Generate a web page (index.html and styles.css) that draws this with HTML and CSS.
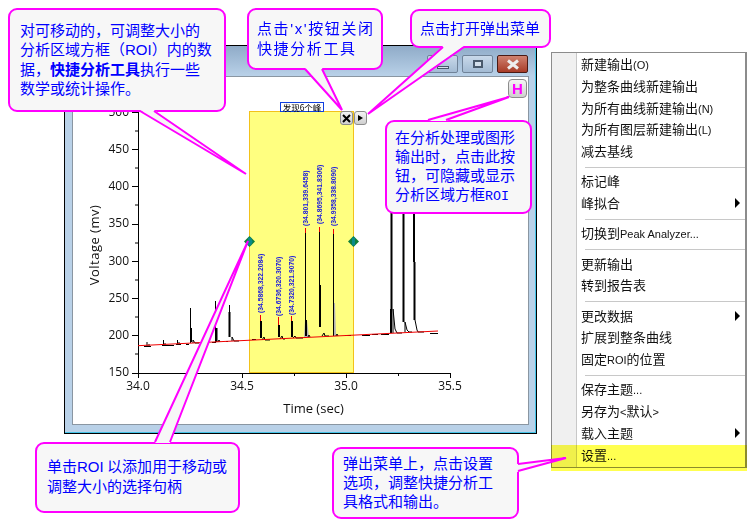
FILE: index.html
```html
<!DOCTYPE html>
<html>

<head>
    <meta charset="utf-8">
    <title>快捷分析工具</title>
    <link rel="stylesheet" href="styles.css">
</head>

<body>
    <div class="canvas">
        <div class="window">
            <div class="controls">
                <span class="ctl ctl-min"><i></i></span>
                <span class="ctl ctl-max"><i></i></span>
                <span class="ctl ctl-close">
                    <svg width="14" height="11" viewBox="0 0 14 11">
                        <path d="M2 1.500L12 9.500M12 1.500L2 9.500" stroke="#eeeeee" stroke-width="3" />
                    </svg>
                </span>
            </div>
            <div class="client">
                <svg class="chart" width="455" height="347" viewBox="73 77 455 347">
                    <!-- ROI -->
                    <rect x="249.500" y="111.500" width="104" height="261" fill="#ffff80" stroke="#f2c21a" />
                    <rect x="280.500" y="102.500" width="43" height="9" fill="#fff" stroke="#1040e0" />
                    <text x="302" y="110.500" class="roi-title">发现6个峰</text>

                    <!-- axes -->
                    <path d="M138.500 111V373.500H450" fill="none" stroke="#000" />
                    <path d="M132 112.500h6M132 149.500h6M132 186.500h6M132 224.500h6M132 261.500h6M132 298.500h6M132 335.500h6M132 373.500h6
                             M135 131h3M135 168h3M135 205h3M135 243h3M135 280h3M135 317h3M135 354h3
                             M138.500 373v5M242.500 373v5M346.500 373v5M450.500 373v5
                             M190.500 373v3M294.500 373v3M398.500 373v3" stroke="#000" fill="none" />

                    <text x="129" y="115.500" class="tick end">500</text>
                    <text x="129" y="152.500" class="tick end">450</text>
                    <text x="129" y="189.500" class="tick end">400</text>
                    <text x="129" y="226.500" class="tick end">350</text>
                    <text x="129" y="264.500" class="tick end">300</text>
                    <text x="129" y="301.500" class="tick end">250</text>
                    <text x="129" y="338.500" class="tick end">200</text>
                    <text x="129" y="376" class="tick end">150</text>
                    <text x="138" y="389.500" class="tick mid">34.0</text>
                    <text x="242" y="389.500" class="tick mid">34.5</text>
                    <text x="346" y="389.500" class="tick mid">35.0</text>
                    <text x="450" y="389.500" class="tick mid">35.5</text>
                    <text x="313.500" y="412.500" class="axis-name mid">Time (sec)</text>
                    <text transform="translate(98.500 245) rotate(-90)" class="axis-name voltage mid">Voltage (mv)</text>

                    <!-- grey fill under the tall peaks -->
                    <path d="M304 337l1-17h2l2 17zM333 336v-33h2l1 33z" fill="#b4b4b4" />

                    <!-- signal, thin strokes -->
                    <path d="M144 346.500h7M147 346v-4M149 346v-2
                             M162 345.500h12M163.500 345v-5M165 345v-2
                             M176 344.500h5M177.500 344v-4M179 344v-2
                             M186 344.500h3M190.500 343V308M193 343v-3l2 3h4
                             M212 342.500h4M215.500 342V301M218 342l1-2 1 2
                             M226 341.500h2M229.500 312V305M232 341v-4l2 4h5
                             M252 339.500h4M262 340l2-3 1 3h5
                             M280 339l2-3 1 3h2M293 338l2-2 1 2h7
                             M305.500 320V233M308 337l1-2 1 2
                             M319.500 285V232M322 336l2-3 1 3h4M333.500 336V234M336 336l1-2 1 2
                             M345 335.500h6M362 335.500h8M372 334.500h6M381 334.500h8
                             M393 333l0-24 2 20 2 4h5M405 332l0-10 2 8 2 2h3M415 320l2 10 1 2h6M430 333.500h8"
                        fill="none" stroke="#000" />
                    <!-- signal, thick strokes -->
                    <path d="M191 342V328M216.500 342V328M229.500 337V312M261 338V321M279 337V325M292 337V321M306 336V320M320 327V285
                             M391 333V309M391.500 309V212M403.500 322V212M414.500 320V262M414 262V212"
                        fill="none" stroke="#000" stroke-width="2" />

                    <path d="M138 345.700L438 331" fill="none" stroke="#f00000" />
                    <path d="M260.500 315v6M278.500 317v8M291.500 316v5M305.500 228v5M319.500 227v5M333.500 229v5" fill="none" stroke="#f00000" />

                    <!-- peak labels -->
                    <text transform="translate(263 313) rotate(-90)" class="peak">(34.5868,322.2084)</text>
                    <text transform="translate(281 316) rotate(-90)" class="peak">(34.6736,320.3070)</text>
                    <text transform="translate(294 315) rotate(-90)" class="peak">(34.7320,321.9070)</text>
                    <text transform="translate(308 226) rotate(-90)" class="peak">(34.801,339.6458)</text>
                    <text transform="translate(322 224) rotate(-90)" class="peak">(34.8695,341.8306)</text>
                    <text transform="translate(336 226) rotate(-90)" class="peak">(34.9358,338.8090)</text>

                    <!-- ROI handles -->
                    <path d="M249.500 236l5.500 5.500-5.500 5.500-5.500-5.500z" fill="#0f7f3c" />
                    <path d="M248 237.500h3l1.500 4-1.500 4h-3z" fill="#0a8a8a" />
                    <path d="M353.500 236l5.500 5.500-5.500 5.500-5.500-5.500z" fill="#0f7f3c" />
                    <path d="M352 237.500h3v8h-3z" fill="#0a8a8a" />
                </svg>
            </div>
        </div>

        <span class="tool tool-x">
            <svg width="9" height="9" viewBox="0 0 9 9">
                <path d="M1 1L8 8M8 1L1 8" stroke="#000" stroke-width="2" />
            </svg>
        </span>
        <span class="tool tool-arrow"><i></i></span>
        <span class="tool tool-h">H</span>

        <div class="menu">
            <div class="menu-item">新建输出<small>(O)</small></div>
            <div class="menu-item">为整条曲线新建输出</div>
            <div class="menu-item">为所有曲线新建输出<small>(N)</small></div>
            <div class="menu-item">为所有图层新建输出<small>(L)</small></div>
            <div class="menu-item">减去基线</div>
            <div class="menu-sep"></div>
            <div class="menu-item">标记峰</div>
            <div class="menu-item sub">峰拟合</div>
            <div class="menu-sep"></div>
            <div class="menu-item">切换到<small>Peak Analyzer...</small></div>
            <div class="menu-sep"></div>
            <div class="menu-item">更新输出</div>
            <div class="menu-item">转到报告表</div>
            <div class="menu-sep"></div>
            <div class="menu-item sub">更改数据</div>
            <div class="menu-item">扩展到整条曲线</div>
            <div class="menu-item">固定<small>ROI</small>的位置</div>
            <div class="menu-sep"></div>
            <div class="menu-item">保存主题<small>...</small></div>
            <div class="menu-item">另存为<small>&lt;</small>默认<small>&gt;</small></div>
            <div class="menu-item sub">载入主题</div>
            <div class="menu-item">设置<small>...</small></div>
        </div>
        <div class="menu-mark"></div>

        <div class="note note-roi">对可移动的，可调整大小的<br>分析区域方框（<span class="latin">ROI</span>）内的数<br>据，<b>快捷分析工具</b>执行一些<br>数学或统计操作。</div>
        <div class="note note-close">点击<span class="latin">'x'</span>按钮关闭<br>快捷分析工具</div>
        <div class="note note-open">点击打开弹出菜单</div>
        <div class="note note-hide">在分析处理或图形<br>输出时，点击此按<br>钮，可隐藏或显示<br>分析区域方框<span class="mono">ROI</span></div>
        <div class="note note-click">单击<span class="latin">ROI</span> 以添加用于移动或<br>调整大小的选择句柄</div>
        <div class="note note-set">弹出菜单上，点击设置<br>选项，调整快捷分析工<br>具格式和输出。</div>

        <!-- callout tails drawn over the note borders -->
        <svg class="tails" width="753" height="529">
            <path class="tail-fill" d="M140 110L246 174L154 110z" />
            <path class="tail-line" d="M140 111L246 174L154 111" />
            <path class="tail-fill" d="M305 68L342 110L322 68z" />
            <path class="tail-line" d="M305 69L342 110L322 69" />
            <path class="tail-fill" d="M443 46L368 114L464 46z" />
            <path class="tail-line" d="M443 47L368 114L464 47" />
            <path class="tail-fill" d="M428 121L509 97L446 121z" />
            <path class="tail-line" d="M428 120L509 97L446 120" />
            <path class="tail-fill" d="M155 443L248 241L170 443z" />
            <path class="tail-line" d="M155 442L248 241L170 442" />
            <path class="tail-fill" d="M517 464L566 458L517 472z" />
            <path class="tail-line" d="M518 464L566 458L518 471" />
        </svg>
    </div>
</body>

</html>
```

FILE: styles.css
```css
html,
body {
    margin: 0;
    padding: 0;
    background-color: #fff;
}

.canvas {
    position: relative;
    width: 753px;
    height: 529px;
    overflow: hidden;
    font-family: "Noto Sans CJK SC", sans-serif;
}

/* plot window */
.window {
    position: absolute;
    left: 64px;
    top: 45px;
    width: 455px;
    height: 348px;
    padding: 31px 8px 8px 8px;
    border: 1px solid #000;
    background: linear-gradient(#8fabc8, #b9d1e8 30px, #b9d1e8);
    box-shadow: inset 0 -1px 0 #45c4e8, inset -1px 0 0 #45c4e8;
}

.client {
    width: 455px;
    height: 347px;
    background-color: #fff;
    box-shadow: 0 0 0 1px #8a96a2;
}

.chart {
    display: block;
}

.controls {
    position: absolute;
    top: 9px;
    right: 8px;
    display: flex;
    gap: 4px;
}

.ctl {
    display: flex;
    align-items: center;
    justify-content: center;
    width: 29px;
    height: 16px;
    border: 1px solid #6f8298;
    border-radius: 2px;
    background: linear-gradient(#c9d9ea, #a3bbd4);
}

.ctl i {
    display: block;
    box-sizing: border-box;
    width: 10px;
    height: 8px;
    border: 2px solid #4a5a6c;
    background-color: #d5e0ec;
}

.ctl-min i {
    width: 12px;
    height: 3px;
    margin-top: 7px;
    border-width: 1px;
}

.ctl-close {
    border-color: #4a1a14;
    background: linear-gradient(#d08270, #a83c28);
}

/* chart text */
.tick,
.axis-name {
    font-family: "Open Sans", sans-serif;
    font-size: 12px;
    fill: #111;
}

.axis-name {
    font-size: 13px;
}

.voltage {
    letter-spacing: 0.500px;
}

.end {
    text-anchor: end;
}

.mid {
    text-anchor: middle;
}

.peak {
    font-family: "Liberation Sans", sans-serif;
    font-size: 6.800px;
    font-weight: bold;
    fill: #1818e0;
}

.roi-title {
    font-size: 8.500px;
    text-anchor: middle;
    fill: #000;
}

/* small buttons on the ROI */
.tool {
    position: absolute;
    box-sizing: border-box;
    display: flex;
    align-items: center;
    justify-content: center;
    border: 1px solid #8c8c8c;
    border-radius: 3px;
    background: linear-gradient(#f4f4f4, #cfcfcf);
    color: #000;
}

.tool-x {
    left: 340px;
    top: 111px;
    width: 13px;
    height: 14px;
}

.tool-arrow {
    left: 354px;
    top: 111px;
    width: 13px;
    height: 14px;
}

.tool-arrow i {
    border-left: 5px solid #000;
    border-top: 3px solid transparent;
    border-bottom: 3px solid transparent;
}

.tool-h {
    left: 508px;
    top: 79px;
    width: 19px;
    height: 19px;
    border-radius: 4px;
    font-family: "Liberation Sans", sans-serif;
    font-size: 15px;
    font-weight: bold;
    color: #ff00ff;
}

/* popup menu */
.menu {
    position: absolute;
    left: 551px;
    top: 52px;
    width: 193px;
    padding-bottom: 2px;
    border: 1px solid #8c8c8c;
    border-right-width: 2px;
    background: linear-gradient(to right, #f0f0f0 24px, #c8c8c8 24px, #c8c8c8 25px, #fff 25px);
    font-size: 13px;
    color: #111;
}

.menu-item {
    position: relative;
    height: 21.750px;
    line-height: 21.500px;
    padding-left: 29px;
    white-space: nowrap;
}

.menu-item small {
    font-family: "Liberation Sans", sans-serif;
    font-size: 11px;
}

.menu-sep {
    height: 8.500px;
    margin-left: 33px;
    background: linear-gradient(#c8c8c8, #c8c8c8) no-repeat 0 5px / 100% 1px;
}

.sub::after {
    content: "";
    position: absolute;
    right: 5px;
    top: 6px;
    border-left: 5px solid #000;
    border-top: 5px solid transparent;
    border-bottom: 5px solid transparent;
}

/* yellow marker laid over the last menu row */
.menu-mark {
    position: absolute;
    left: 551px;
    top: 445px;
    width: 196px;
    height: 26px;
    background-color: #ffff50;
    mix-blend-mode: multiply;
}

/* callouts */
.note {
    position: absolute;
    box-sizing: border-box;
    border: 2px solid #ff00ff;
    border-radius: 9px;
    background-color: #f7f7f7;
    color: #0000ff;
    font-size: 15px;
    line-height: 19px;
    white-space: nowrap;
}

.latin {
    font-family: "Liberation Sans", sans-serif;
}

.mono {
    font-family: "Liberation Mono", monospace;
    font-size: 13.300px;
}

.note-roi {
    left: 8px;
    top: 8px;
    width: 218px;
    height: 104px;
    padding: 10px 0 0 10px;
}

.note-close {
    left: 247px;
    top: 8px;
    width: 136px;
    height: 62px;
    padding: 8px 0 0 8px;
    letter-spacing: 1.600px;
}

.note-open {
    left: 410px;
    top: 9px;
    width: 141px;
    height: 39px;
    padding: 7px 0 0 8px;
}

.note-hide {
    left: 385px;
    top: 120px;
    width: 147px;
    height: 94px;
    padding: 5px 0 0 8px;
}

.note-click {
    left: 35px;
    top: 442px;
    width: 205px;
    height: 71px;
    padding: 12px 0 0 10px;
}

.note-set {
    left: 332px;
    top: 447px;
    width: 187px;
    height: 72px;
    padding: 4px 0 0 9px;
}

.tails {
    position: absolute;
    left: 0;
    top: 0;
    pointer-events: none;
}

.tail-fill {
    fill: #f7f7f7;
}

.tail-line {
    fill: none;
    stroke: #ff00ff;
    stroke-width: 2;
}
```
